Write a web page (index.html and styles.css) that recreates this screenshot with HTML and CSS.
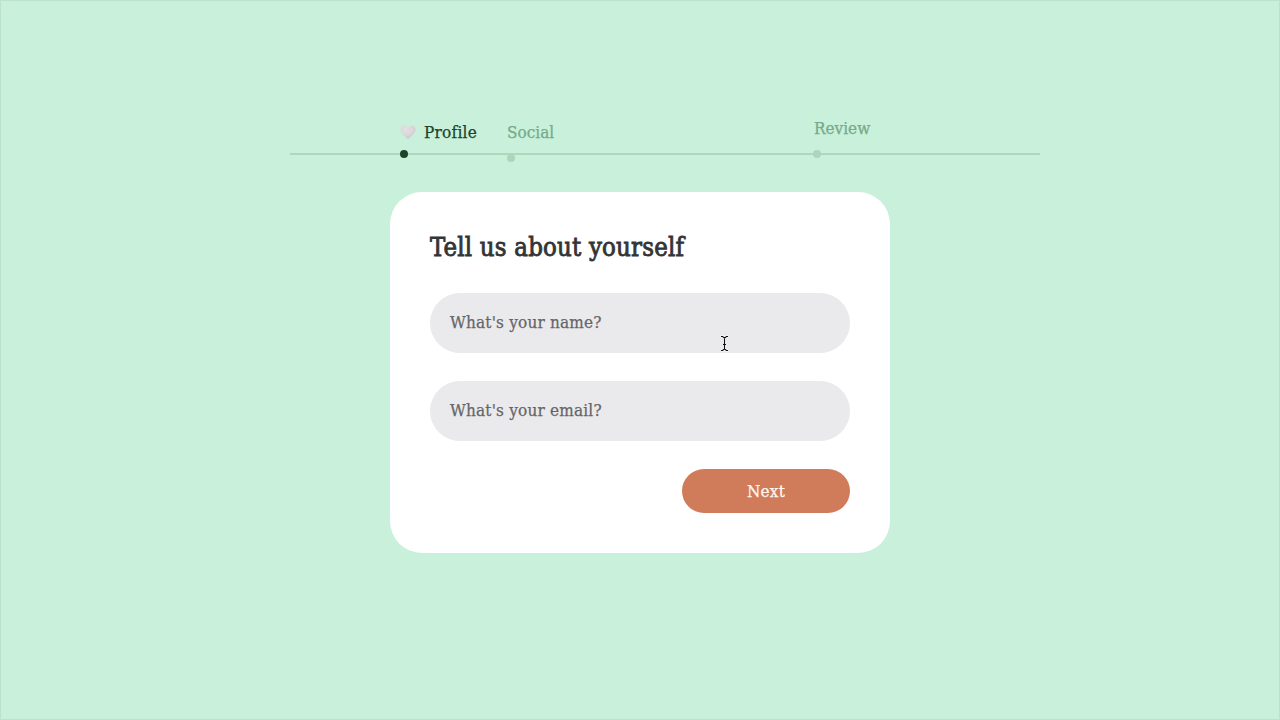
FILE: index.html
```html
<!DOCTYPE html>
<html lang="en">
<head>
<meta charset="utf-8">
<title>Profile</title>
<link rel="stylesheet" href="styles.css">
</head>
<body>
<main class="page">
  <nav class="steps">
    <div class="step step-profile active">
      <span class="label">
        <svg class="heart" width="16" height="16" viewBox="0 0 16 16"><defs><radialGradient id="hg" cx=".35" cy=".25" r=".8"><stop offset="0" stop-color="#e4dfe2"/><stop offset=".6" stop-color="#dad6d9"/><stop offset="1" stop-color="#c6c4c7"/></radialGradient></defs><path d="M8 15C5.500 13 .5 9.500.5 5.300.5 .8 6.300.2 8 3.700 9.700.2 15.500.8 15.500 5.300 15.500 9.500 10.500 13 8 15Z" fill="url(#hg)"/></svg>
        <span class="word-profile">Profile</span>
      </span>
      <span class="dot"></span>
    </div>
    <div class="step step-social">
      <span class="label">Social</span>
      <span class="dot"></span>
    </div>
    <div class="step step-review">
      <span class="label word-review">Review</span>
      <span class="dot"></span>
    </div>
  </nav>
  <form class="card">
    <h1 class="title">Tell us about yourself</h1>
    <div class="field">What's your name?</div>
    <div class="field">What's your email?</div>
    <button class="next" type="button">Next</button>
  </form>
</main>
<svg class="cursor" width="9" height="17" viewBox="0 0 9 17"><g fill="none" stroke="#fff" stroke-width="2.400" opacity=".7"><path d="M1 1.500h1.500l2 1.500 2-1.500H8M1 15.500h1.500l2-1.500 2 1.500H8M4.500 3v11"/></g><path d="M1 1.500h1.500l2 1.500 2-1.500H8M1 15.500h1.500l2-1.500 2 1.500H8M4.500 3v11M3 9.500h3" fill="none" stroke="#111" stroke-width="1.100"/></svg>
</body>
</html>
```
FILE: styles.css
```css
* { box-sizing: border-box; }
body {
  margin: 0;
  font-family: "DejaVu Serif Condensed", "DejaVu Serif", serif;
  font-stretch: condensed;
  background: #c8f0da;
}
.page {
  height: 720px;
  padding-top: 116px;
  border: 1px solid #bde1cd;
  display: flex;
  flex-direction: column;
  align-items: center;
}
.steps {
  position: relative;
  width: 500px;
  height: 75px;
  display: grid;
  grid-template-columns: 107px 306px 77px;
  padding-left: 10px;
  align-items: start;
}
.steps::before {
  content: "";
  position: absolute;
  left: -100px;
  top: 36px;
  width: 750px;
  height: 2px;
  background: #acd9bc;
}
.step {
  position: relative;
  color: #76aa8b;
  font-size: 17px;
  line-height: 24px;
  -webkit-text-stroke: .25px currentColor;
}
.label { display: flex; align-items: center; height: 24px; white-space: nowrap; }
.heart { margin-right: 8px; }
.word-profile { letter-spacing: .25px; }
.word-review { padding-left: 1px; line-height: 22px; height: 22px; margin-bottom: 11px; }
.dot { display: block; width: 8px; height: 8px; border-radius: 50%; background: #acd6bb; }
.step-profile { padding-top: 3px; }
.step-profile .dot { margin-top: 6px; }
.step-social { padding-top: 3px; }
.step-social .dot { margin-top: 10px; }
.active { color: #1b4428; }
.active .dot { background: #1b4428; }
.card {
  width: 500px;
  height: 361px;
  padding: 38px 40px 40px;
  border-radius: 32px;
  background: #fff;
  display: flex;
  flex-direction: column;
}
.title {
  margin: 0 0 29px;
  height: 34px;
  font-size: 25.5px;
  line-height: 34px;
  font-weight: 400;
  letter-spacing: .2px;
  color: #333436;
  -webkit-text-stroke: .8px #333436;
  white-space: nowrap;
}
.field {
  height: 60px;
  margin-bottom: 28px;
  padding: 0 20px;
  border-radius: 30px;
  background: #eaeaec;
  color: #666668;
  font-size: 17px;
  line-height: 59px;
  letter-spacing: .2px;
  -webkit-text-stroke: .25px currentColor;
  white-space: nowrap;
}
.next {
  align-self: flex-end;
  width: 168px;
  height: 44px;
  padding: 0;
  border: 0;
  border-radius: 22px;
  background: #d07c5b;
  color: #fff7ef;
  font: inherit;
  font-size: 17px;
  letter-spacing: .2px;
  -webkit-text-stroke: .25px currentColor;
}
.cursor { position: absolute; left: 720px; top: 335px; }
```
